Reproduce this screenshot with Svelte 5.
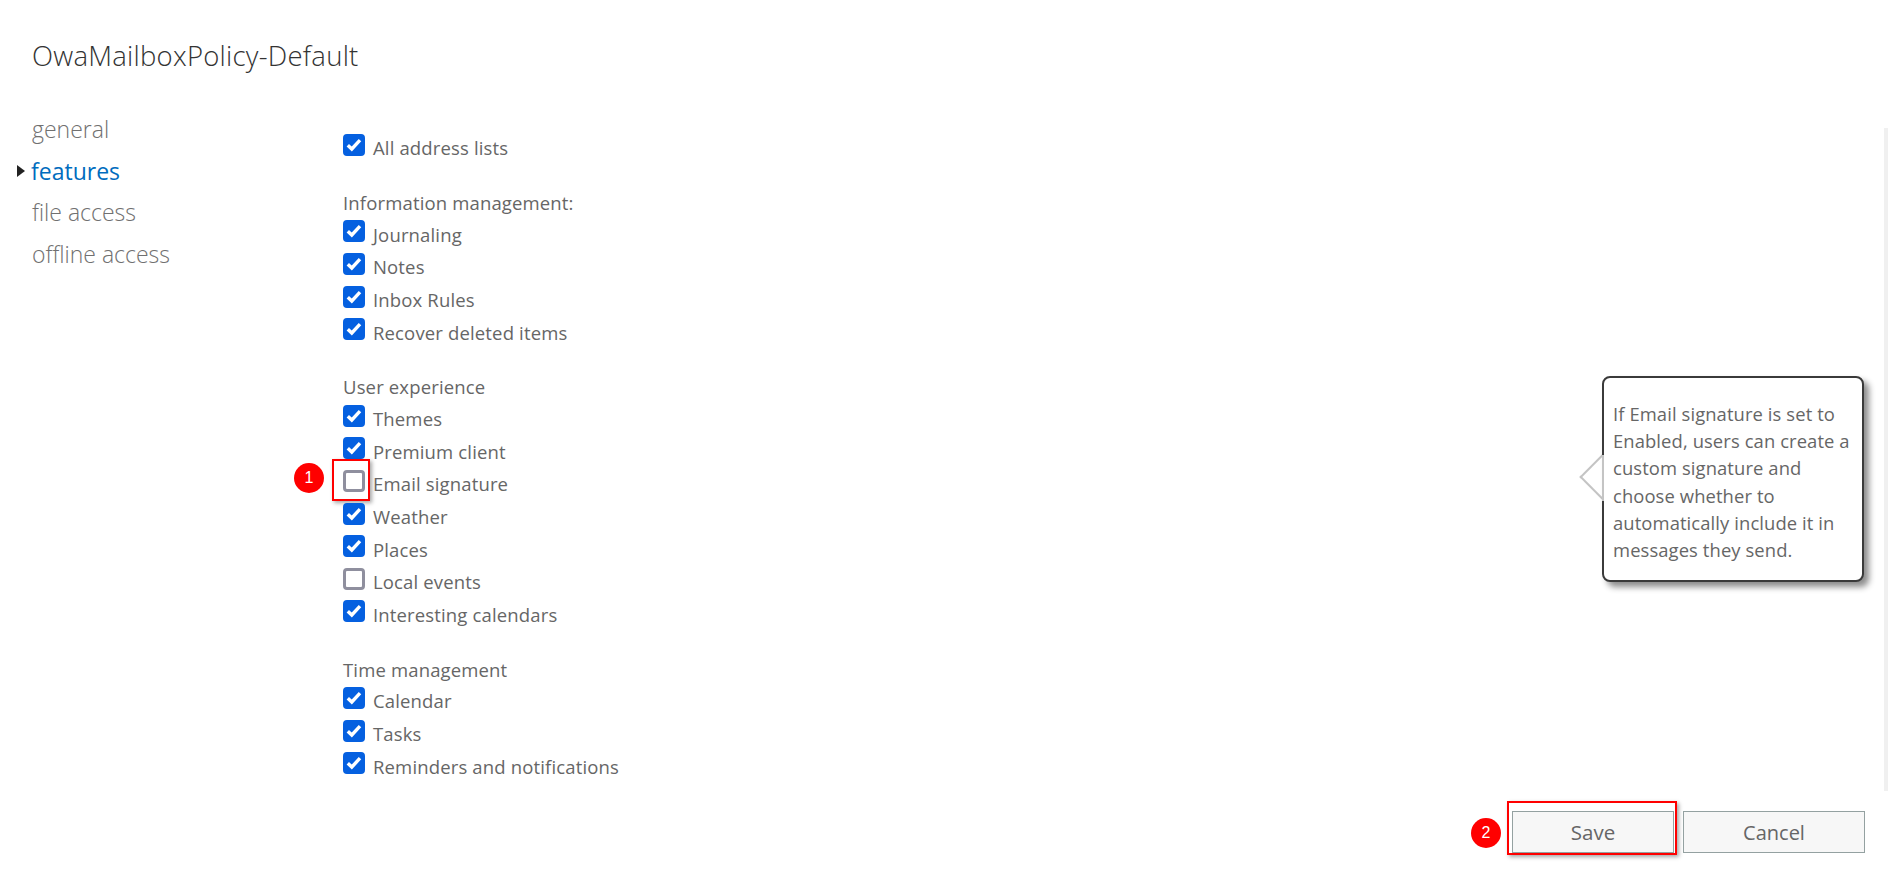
<script>
  const sections = [
    { rows: [{ label: 'All address lists', on: true }] },
    {
      title: 'Information management:',
      rows: [
        { label: 'Journaling', on: true },
        { label: 'Notes', on: true },
        { label: 'Inbox Rules', on: true },
        { label: 'Recover deleted items', on: true },
      ],
    },
    {
      title: 'User experience',
      rows: [
        { label: 'Themes', on: true },
        { label: 'Premium client', on: true },
        { label: 'Email signature', on: false, mark: true },
        { label: 'Weather', on: true },
        { label: 'Places', on: true },
        { label: 'Local events', on: false },
        { label: 'Interesting calendars', on: true },
      ],
    },
    {
      title: 'Time management',
      rows: [
        { label: 'Calendar', on: true },
        { label: 'Tasks', on: true },
        { label: 'Reminders and notifications', on: true },
      ],
    },
  ];
  const nav = ['general', 'features', 'file access', 'offline access'];
</script>

<div class="page">
  <h1>OwaMailboxPolicy-Default</h1>

  <div class="body">
    <nav>
      {#each nav as item}
        <div class="nav-item" class:active={item === 'features'}>{item}</div>
      {/each}
    </nav>

    <div class="form">
      {#each sections as section}
        <section>
          {#if section.title}<div class="section-title">{section.title}</div>{/if}
          {#each section.rows as row}
            <div class="row">
              <span class="box" class:on={row.on}>
                {#if row.on}
                  <svg width="16" height="14" viewBox="0 0 16 14"><path d="M1.8 7.2 L5.8 11 L14 2.2" fill="none" stroke="#fff" stroke-width="3.4"/></svg>
                {/if}
                {#if row.mark}
                  <span class="mark"></span>
                  <span class="badge one">1</span>
                {/if}
              </span>
              <span>{row.label}</span>
            </div>
          {/each}
        </section>
      {/each}
    </div>

    <aside class="tip">
      If Email signature is set to Enabled, users can create a custom signature and choose whether to automatically include it in messages they send.
    </aside>
  </div>

  <footer>
    <button class="save">
      Save
      <span class="mark"></span>
      <span class="badge two">2</span>
    </button>
    <button>Cancel</button>
  </footer>
  <div class="scrollbar"></div>
</div>

<style>
  :global(body) {
    margin: 0;
    background: #fff;
  }

  .page {
    position: relative;
    height: 895px;
    overflow: hidden;
    font-family: "Open Sans", "Noto Sans", sans-serif;
    color: #666;
  }

  h1 {
    margin: 0;
    padding: 36px 0 0 32px;
    height: 67px;
    box-sizing: border-box;
    font-size: 27.5px;
    letter-spacing: 0.25px;
    line-height: 40px;
    font-weight: 300;
    color: #333;
  }

  .body {
    display: flex;
    position: relative;
  }

  nav {
    width: 343px;
    padding: 42px 0 0 32px;
    box-sizing: border-box;
    font-size: 23px;
    font-weight: 300;
    color: #707070;
  }

  .nav-item {
    height: 41.5px;
    line-height: 41px;
    position: relative;
  }

  .nav-item.active {
    color: #006cbe;
    font-weight: 400;
    margin-left: -1px;
  }

  .nav-item.active::before {
    content: "";
    position: absolute;
    left: -14px;
    top: 14px;
    border-left: 8px solid #222;
    border-top: 6px solid transparent;
    border-bottom: 6px solid transparent;
  }

  .form {
    padding-top: 64.5px;
    font-size: 18.5px;
    letter-spacing: 0.15px;
  }

  section {
    margin-bottom: 24px;
  }

  .section-title {
    height: 30px;
    line-height: 30px;
  }

  .row {
    display: flex;
    align-items: center;
    gap: 8px;
    height: 32.6px;
  }

  .box {
    position: relative;
    width: 22px;
    height: 22px;
    box-sizing: border-box;
    border: 3px solid #8f8f9e;
    border-radius: 4px;
    display: flex;
    align-items: center;
    justify-content: center;
    margin-top: -6px;
  }

  .box.on {
    background: #0560e0;
    border-color: #0560e0;
  }

  .mark {
    position: absolute;
    border: 2px solid #f00;
    box-shadow: 2px 2px 4px rgba(0, 0, 0, 0.35);
    pointer-events: none;
  }

  .box .mark {
    left: -14px;
    top: -14px;
    width: 34px;
    height: 38px;
  }

  .badge {
    position: absolute;
    width: 30px;
    height: 30px;
    border-radius: 50%;
    background: #f00;
    color: #fff;
    font: 16px/30px "Liberation Sans", sans-serif;
    letter-spacing: 0;
    text-align: center;
  }

  .badge.one {
    left: -52px;
    top: -10px;
  }

  .badge.two {
    left: -42px;
    top: 6px;
  }

  .tip {
    position: absolute;
    left: 1602px;
    top: 309px;
    width: 262px;
    height: 206px;
    box-sizing: border-box;
    padding: 22px 8px 0 9px;
    background: #fff;
    border: 2px solid #3a3a3a;
    border-radius: 8px;
    box-shadow: 5px 5px 6px rgba(0, 0, 0, 0.45);
    font-size: 18.4px;
    letter-spacing: 0.1px;
    line-height: 27.2px;
  }

  /* the arrow, drawn behind the box */
  .tip::before {
    content: "";
    position: absolute;
    left: -18px;
    top: 83px;
    width: 32px;
    height: 32px;
    box-sizing: border-box;
    background: #fff;
    border-left: 2px solid #c4c4c4;
    border-bottom: 2px solid #c4c4c4;
    transform: rotate(45deg);
    z-index: -1;
  }

  /* the side of the box is light where the arrow joins it */
  .tip::after {
    content: "";
    position: absolute;
    left: -2px;
    top: 77px;
    width: 2px;
    height: 46px;
    background: #c4c4c4;
  }

  footer {
    position: absolute;
    left: 1512px;
    top: 811px;
    display: flex;
    gap: 9px;
  }

  button {
    position: relative;
    width: 182px;
    height: 42px;
    padding: 0;
    background: #f7f7f7;
    border: 1px solid #94a1a1;
    color: #666;
    font: 400 20px "Open Sans", sans-serif;
  }

  button.save {
    width: 162px;
    font-size: 20.5px;
  }

  button.save .mark {
    left: -6px;
    top: -11px;
    width: 166px;
    height: 50px;
  }

  .scrollbar {
    position: absolute;
    right: 0;
    top: 128px;
    height: 663px;
    width: 4px;
    background: #f0f0f0;
  }
</style>
